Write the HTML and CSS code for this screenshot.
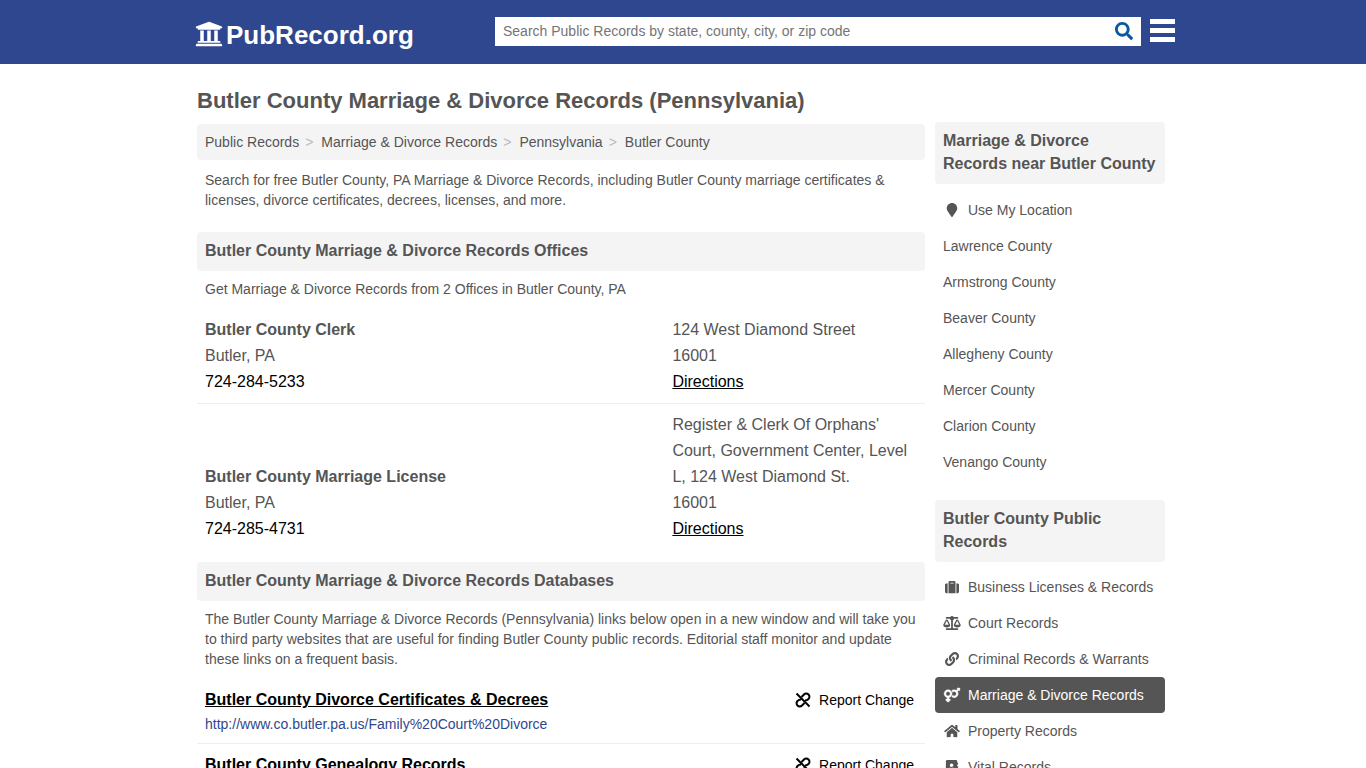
FILE: index.html
```
<!DOCTYPE html>
<html lang="en">
<head>
    <meta charset="UTF-8">
    <meta name="viewport" content="width=device-width, initial-scale=1.0">
    <title>Butler County Marriage &amp; Divorce Records (Pennsylvania)</title>
    <link rel="stylesheet" href="styles.css">
</head>
<body>

    <!-- Shared icons -->
    <svg class="sprite" aria-hidden="true">
        <symbol id="unlink" viewBox="0 0 16 16">
            <g fill="none" stroke="currentColor" stroke-width="2">
                <path d="M1.500 1.500l13 13"/>
                <path d="M6.500 5l2.500-2.500a3.100 3.100 0 0 1 4.500 4.500q-1.500 1.500-3.500 1.500"/>
                <path d="M6 7.500q-2 0-3.500 1.500a3.100 3.100 0 0 0 4.500 4.500l2.500-2.500"/>
            </g>
        </symbol>
    </svg>

    <header class="header">
        <div class="header-row">
            <a class="logo" href="#">
                <svg viewBox="0 0 512 512" aria-hidden="true"><path d="M496 128v16a8 8 0 0 1-8 8h-24v12c0 6.627-5.373 12-12 12H60c-6.627 0-12-5.373-12-12v-12H24a8 8 0 0 1-8-8v-16a8 8 0 0 1 4.941-7.392l232-88a7.996 7.996 0 0 1 6.118 0l232 88A8 8 0 0 1 496 128zm-24 304H40c-13.255 0-24 10.745-24 24v16a8 8 0 0 0 8 8h464a8 8 0 0 0 8-8v-16c0-13.255-10.745-24-24-24zM96 192v192H60c-6.627 0-12 5.373-12 12v20h416v-20c0-6.627-5.373-12-12-12h-36V192h-64v192h-64V192h-64v192h-64V192H96z"/></svg>
                <span>PubRecord.org</span>
            </a>
            <form class="search" onsubmit="return false">
                <input type="text" aria-label="Search Public Records" placeholder="Search Public Records by state, county, city, or zip code">
                <button type="submit" aria-label="Search">
                    <svg viewBox="0 0 512 512"><path d="M505 442.7L405.3 343c-4.5-4.5-10.6-7-17-7H372c27.6-35.3 44-79.7 44-128C416 93.1 322.9 0 208 0S0 93.1 0 208s93.1 208 208 208c48.3 0 92.7-16.4 128-44v16.3c0 6.4 2.5 12.5 7 17l99.7 99.7c9.4 9.4 24.6 9.4 33.9 0l28.3-28.3c9.4-9.4 9.4-24.6.1-34zM208 336c-70.7 0-128-57.2-128-128 0-70.7 57.2-128 128-128 70.7 0 128 57.2 128 128 0 70.7-57.2 128-128 128z"/></svg>
                </button>
            </form>
            <button class="menu" type="button" aria-label="Menu">
                <svg viewBox="0 0 25 23"><path d="M0 0h25v5H0zM0 9h25v5H0zM0 18h25v5H0z"/></svg>
            </button>
        </div>
    </header>

    <div class="page">
        <main class="main">
            <h1>Butler County Marriage &amp; Divorce Records (Pennsylvania)</h1>
            <nav class="breadcrumb" aria-label="Breadcrumb">
                <a href="#">Public Records</a>
                <a href="#">Marriage &amp; Divorce Records</a>
                <a href="#">Pennsylvania</a>
                <a href="#">Butler County</a>
            </nav>
            <p class="intro">Search for free Butler County, PA Marriage &amp; Divorce Records, including Butler County marriage certificates &amp; licenses, divorce certificates, decrees, licenses, and more.</p>

            <h2 class="heading">Butler County Marriage &amp; Divorce Records Offices</h2>
            <p class="note">Get Marriage &amp; Divorce Records from 2 Offices in Butler County, PA</p>
            <table class="offices">
                <tr>
                    <td>
                        <strong>Butler County Clerk</strong><br>
                        Butler, PA<br>
                        <a class="phone" href="tel:7242845233">724-284-5233</a>
                    </td>
                    <td>
                        124 West Diamond Street<br>
                        16001<br>
                        <a href="#">Directions</a>
                    </td>
                </tr>
                <tr>
                    <td>
                        <strong>Butler County Marriage License</strong><br>
                        Butler, PA<br>
                        <a class="phone" href="tel:7242854731">724-285-4731</a>
                    </td>
                    <td>
                        Register &amp; Clerk Of Orphans' Court, Government Center, Level L, 124 West Diamond St.<br>
                        16001<br>
                        <a href="#">Directions</a>
                    </td>
                </tr>
            </table>

            <h2 class="heading">Butler County Marriage &amp; Divorce Records Databases</h2>
            <p class="note">The Butler County Marriage &amp; Divorce Records (Pennsylvania) links below open in a new window and will take you to third party websites that are useful for finding Butler County public records. Editorial staff monitor and update these links on a frequent basis.</p>
            <div class="records">
                <div class="record">
                    <div>
                        <a class="record-title" href="#">Butler County Divorce Certificates &amp; Decrees</a>
                        <span class="record-url">http://www.co.butler.pa.us/Family%20Court%20Divorce</span>
                    </div>
                    <a class="report" href="#"><svg aria-hidden="true"><use href="#unlink"/></svg>Report Change</a>
                </div>
                <div class="record">
                    <div>
                        <a class="record-title" href="#">Butler County Genealogy Records</a>
                    </div>
                    <a class="report" href="#"><svg aria-hidden="true"><use href="#unlink"/></svg>Report Change</a>
                </div>
            </div>
        </main>

        <aside class="sidebar">
            <h2 class="heading">Marriage &amp; Divorce Records near Butler County</h2>
            <ul>
                <li><a href="#"><svg viewBox="0 0 384 512" aria-hidden="true"><path d="M172.268 501.67C26.97 291.031 0 269.413 0 192 0 85.961 85.961 0 192 0s192 85.961 192 192c0 77.413-26.97 99.031-172.268 309.67-9.535 13.774-29.93 13.773-39.464 0z"/></svg>Use My Location</a></li>
                <li><a href="#">Lawrence County</a></li>
                <li><a href="#">Armstrong County</a></li>
                <li><a href="#">Beaver County</a></li>
                <li><a href="#">Allegheny County</a></li>
                <li><a href="#">Mercer County</a></li>
                <li><a href="#">Clarion County</a></li>
                <li><a href="#">Venango County</a></li>
            </ul>

            <h2 class="heading">Butler County Public Records</h2>
            <ul class="categories">
                <li><a href="#"><svg viewBox="0 0 512 512" aria-hidden="true"><path d="M128 480h256V80c0-26.5-21.5-48-48-48H176c-26.5 0-48 21.5-48 48v400zm64-384h128v32H192V96zm320 80v256c0 26.5-21.5 48-48 48h-48V128h48c26.5 0 48 21.5 48 48zM96 480H48c-26.5 0-48-21.5-48-48V176c0-26.5 21.5-48 48-48h48v352z"/></svg>Business Licenses &amp; Records</a></li>
                <li><a href="#"><svg viewBox="0 0 640 512" aria-hidden="true"><path d="M256 336h-.02c0-16.18 1.34-8.73-85.05-181.51-17.65-35.29-68.19-35.36-85.87 0C-2.06 328.75.02 320.33.02 336H0c0 44.18 57.31 80 128 80s128-35.82 128-80zM128 176l72 144H56l72-144zm511.98 160c0-16.18 1.34-8.73-85.05-181.51-17.65-35.29-68.19-35.36-85.87 0-87.12 174.26-85.04 165.84-85.04 181.51H384c0 44.18 57.31 80 128 80s128-35.82 128-80h-.02zM440 320l72-144 72 144H440zm88 128H352V153.25c23.51-10.29 41.16-31.48 46.39-57.25H528c8.84 0 16-7.16 16-16V48c0-8.84-7.16-16-16-16H383.64C369.04 12.68 346.09 0 320 0s-49.04 12.68-63.64 32H112c-8.84 0-16 7.16-16 16v32c0 8.84 7.16 16 16 16h129.61c5.23 25.76 22.87 46.96 46.39 57.25V448H112c-8.84 0-16 7.16-16 16v32c0 8.84 7.16 16 16 16h416c8.84 0 16-7.16 16-16v-32c0-8.84-7.16-16-16-16z"/></svg>Court Records</a></li>
                <li><a href="#"><svg viewBox="0 0 512 512" aria-hidden="true"><path d="M326.612 185.391c59.747 59.809 58.927 155.698.36 214.59-.11.12-.24.25-.36.37l-67.2 67.2c-59.27 59.27-155.699 59.262-214.96 0-59.27-59.26-59.27-155.7 0-214.96l37.106-37.106c9.84-9.84 26.786-3.3 27.294 10.606.648 17.722 3.826 35.527 9.69 52.721 1.986 5.822.567 12.262-3.783 16.612l-13.087 13.087c-28.026 28.026-28.905 73.66-1.155 101.96 28.024 28.579 74.086 28.749 102.325.51l67.2-67.19c28.191-28.191 28.073-73.757 0-101.83-3.701-3.694-7.429-6.564-10.341-8.569a16.037 16.037 0 0 1-6.947-12.606c-.396-10.567 3.348-21.456 11.698-29.806l21.054-21.055c5.521-5.521 14.182-6.199 20.584-1.731a152.482 152.482 0 0 1 20.522 17.197zM467.547 44.449c-59.261-59.262-155.69-59.27-214.96 0l-67.2 67.2c-.12.12-.25.25-.36.37-58.566 58.892-59.387 154.781.36 214.59a152.454 152.454 0 0 0 20.521 17.196c6.402 4.468 15.064 3.789 20.584-1.731l21.054-21.055c8.35-8.35 12.094-19.239 11.698-29.806a16.037 16.037 0 0 0-6.947-12.606c-2.912-2.005-6.64-4.875-10.341-8.569-28.073-28.073-28.191-73.639 0-101.83l67.2-67.19c28.239-28.239 74.3-28.069 102.325.51 27.75 28.3 26.872 73.934-1.155 101.96l-13.087 13.087c-4.35 4.35-5.769 10.79-3.783 16.612 5.864 17.194 9.042 34.999 9.69 52.721.509 13.906 17.454 20.446 27.294 10.606l37.106-37.106c59.271-59.259 59.271-155.699.001-214.959z"/></svg>Criminal Records &amp; Warrants</a></li>
                <li><a class="active" href="#"><svg viewBox="0 0 576 512" aria-hidden="true"><path d="M564 0h-79c-10.7 0-16 12.9-8.5 20.5l16.9 16.9-48.7 48.7C422.5 72.1 396.2 64 368 64c-33.7 0-64.6 11.6-89.2 30.9 14 16.7 25 36 32.1 57.1 14.5-14.8 34.7-24 57.1-24 44.1 0 80 35.9 80 80s-35.9 80-80 80c-22.3 0-42.6-9.2-57.1-24-7.1 21.1-18 40.4-32.1 57.1 24.5 19.4 55.5 30.9 89.2 30.9 79.5 0 144-64.5 144-144 0-28.2-8.1-54.5-22.1-76.7l48.7-48.7 16.9 16.9c2.4 2.4 5.4 3.5 8.4 3.5 6.2 0 12.1-4.8 12.1-12V12c0-6.6-5.4-12-12-12zM144 64C64.5 64 0 128.5 0 208c0 68.5 47.9 125.9 112 140.4V400H76c-6.6 0-12 5.4-12 12v40c0 6.6 5.4 12 12 12h36v36c0 6.6 5.4 12 12 12h40c6.6 0 12-5.4 12-12v-36h36c6.6 0 12-5.4 12-12v-40c0-6.6-5.4-12-12-12h-36v-51.6c64.1-14.6 112-71.9 112-140.4 0-79.5-64.5-144-144-144zm0 224c-44.1 0-80-35.9-80-80s35.9-80 80-80 80 35.9 80 80-35.9 80-80 80z"/></svg>Marriage &amp; Divorce Records</a></li>
                <li><a href="#"><svg viewBox="0 0 576 512" aria-hidden="true"><path d="M280.37 148.26L96 300.11V464a16 16 0 0 0 16 16l112.06-.29a16 16 0 0 0 15.92-16V368a16 16 0 0 1 16-16h64a16 16 0 0 1 16 16v95.64a16 16 0 0 0 16 16.05L464 480a16 16 0 0 0 16-16V300L295.67 148.26a12.19 12.19 0 0 0-15.3 0zM571.6 251.47L488 182.56V44.05a12 12 0 0 0-12-12h-56a12 12 0 0 0-12 12v72.61L318.47 43a48 48 0 0 0-61 0L4.34 251.47a12 12 0 0 0-1.6 16.9l25.5 31A12 12 0 0 0 45.15 301l235.22-193.74a12.19 12.19 0 0 1 15.3 0L530.9 301a12 12 0 0 0 16.9-1.6l25.5-31a12 12 0 0 0-1.7-16.93z"/></svg>Property Records</a></li>
                <li><a href="#"><svg viewBox="0 0 448 512" aria-hidden="true"><path d="M436 160c6.6 0 12-5.4 12-12v-40c0-6.6-5.4-12-12-12h-20V48c0-26.5-21.5-48-48-48H48C21.5 0 0 21.5 0 48v416c0 26.5 21.5 48 48 48h320c26.5 0 48-21.5 48-48v-48h20c6.6 0 12-5.4 12-12v-40c0-6.6-5.4-12-12-12h-20v-64h20c6.6 0 12-5.4 12-12v-40c0-6.6-5.4-12-12-12h-20v-64h20zm-228-32c35.3 0 64 28.7 64 64s-28.7 64-64 64-64-28.7-64-64 28.7-64 64-64zm112 236.800c0 10.600-10 19.200-22.400 19.200H118.400C106 384 96 375.400 96 364.800v-19.200c0-31.800 30.100-57.600 67.200-57.600h5c12.300 5.100 25.700 8 39.800 8s27.600-2.900 39.800-8h5c37.100 0 67.200 25.800 67.200 57.600v19.200z"/></svg>Vital Records</a></li>
            </ul>
        </aside>
    </div>

</body>
</html>
```
FILE: styles.css
```
* {
    box-sizing: border-box;
}
body {
    margin: 0;
    background: #fff;
    color: #555;
    font-family: "Liberation Sans", Arial, sans-serif;
    font-size: 14px;
    line-height: 20px;
}
a {
    color: inherit;
    text-decoration: none;
}
svg {
    fill: currentColor;
}
h1, h2, p, ul {
    margin: 0;
    padding: 0;
}
.sprite {
    display: none;
}

/* Header */
.header {
    background: #2f478f;
    color: #fff;
}
.header-row {
    display: flex;
    align-items: center;
    max-width: 984px;
    height: 64px;
    margin: 0 auto;
    padding: 0 0 2px 4px;
}
.logo {
    display: flex;
    align-items: center;
    gap: 3px;
    flex: 0 0 300px;
    padding-top: 8px;
    font-size: 26px;
    font-weight: bold;
    line-height: 30px;
}
.logo svg {
    width: 28px;
    height: 28px;
    margin-bottom: 3px;
}
.search {
    display: flex;
    flex: 1;
    height: 29px;
    background: #fff;
}
.search input {
    flex: 1;
    min-width: 0;
    padding: 0 8px;
    border: 0;
    background: none;
    font: inherit;
}
.search input::placeholder {
    color: #757575;
}
.search button {
    display: flex;
    align-items: center;
    padding: 0 8px;
    border: 0;
    background: none;
    color: #0d57a0;
    cursor: pointer;
}
.search button svg {
    width: 18px;
    height: 18px;
}
.menu {
    margin: 0 0 2px 9px;
    padding: 0;
    border: 0;
    background: none;
    color: #fff;
    cursor: pointer;
}
.menu svg {
    display: block;
    width: 25px;
    height: 23px;
}

/* Page columns */
.page {
    display: flex;
    align-items: flex-start;
    gap: 10px;
    max-width: 972px;
    margin: 0 auto;
    padding-right: 4px;
}
.main {
    flex: 1;
    min-width: 0;
    padding-top: 23px;
}
.sidebar {
    flex: 0 0 230px;
    padding-top: 58px;
}

h1 {
    margin-bottom: 9px;
    font-size: 22px;
    line-height: 28px;
}
.heading {
    padding: 7px 8px 9px;
    border-radius: 4px;
    background: #f4f4f4;
    font-size: 16px;
    line-height: 23px;
}
.breadcrumb {
    display: flex;
    padding: 8px;
    border-radius: 4px;
    background: #f4f4f4;
}
.breadcrumb a:not(:last-child)::after {
    content: ">";
    padding: 0 8px 0 6px;
    color: #bbb;
}
.intro {
    padding: 10px 8px 22px;
}
.note {
    padding: 8px;
}

/* Offices */
.offices {
    width: 100%;
    margin: 2px 0 12px;
    border-collapse: collapse;
    font-size: 16px;
    line-height: 26px;
}
.offices td {
    padding: 8px;
    vertical-align: bottom;
}
.offices td:first-child {
    width: 64.2%;
}
.offices tr + tr {
    border-top: 1px solid #eee;
}
.offices a {
    color: #000;
    text-decoration: underline;
}
.offices .phone {
    text-decoration: none;
}

/* Databases */
.records {
    margin-top: 2px;
}
.record {
    display: flex;
    justify-content: space-between;
    align-items: flex-start;
    padding: 8px 11px 7px 8px;
    border-bottom: 1px solid #eee;
}
.record-title {
    display: block;
    color: #000;
    font-size: 16px;
    font-weight: bold;
    line-height: 26px;
    text-decoration: underline;
}
.record-url {
    color: #2f478f;
    line-height: 23px;
}
.report {
    display: flex;
    align-items: center;
    gap: 8px;
    color: #000;
    line-height: 26px;
}
.report svg {
    width: 16px;
    height: 16px;
}

/* Sidebar */
.sidebar ul {
    margin: 8px 0 20px;
    list-style: none;
}
.sidebar .categories {
    margin-top: 7px;
}
.sidebar li a {
    display: flex;
    align-items: center;
    gap: 7px;
    padding: 8px;
    border-radius: 4px;
}
.sidebar li svg {
    width: 18px;
    height: 14px;
}
.sidebar .active {
    background: #555;
    color: #fff;
}
.sidebar .active svg {
    stroke: currentColor;
    stroke-width: 16;
    overflow: visible;
}
```
